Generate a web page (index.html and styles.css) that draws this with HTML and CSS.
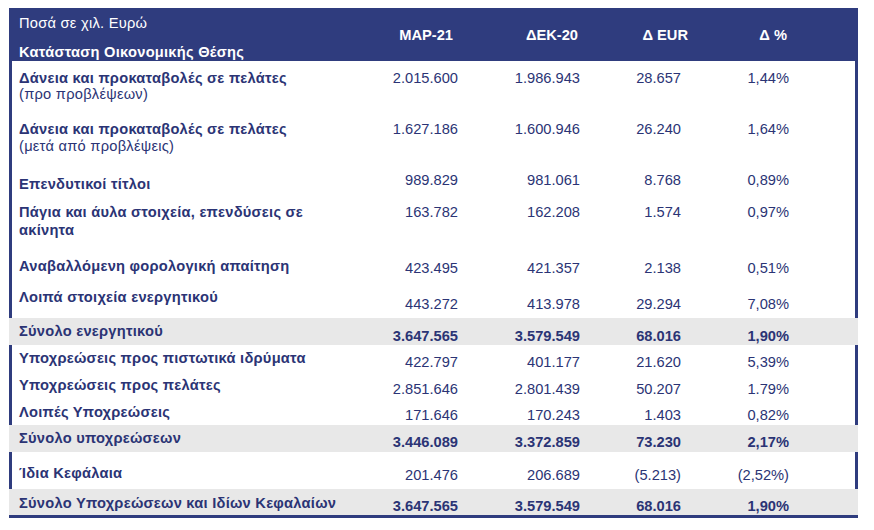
FILE: index.html
```html
<!DOCTYPE html>
<html lang="el">
<head>
<meta charset="utf-8">
<title>Κατάσταση Οικονομικής Θέσης</title>
<link rel="stylesheet" href="styles.css">
</head>
<body>
<div class="panel">
  <div class="row head">
    <div class="lab">
      <div class="unit">Ποσά σε χιλ. Ευρώ</div>
      <div class="title">Κατάσταση Οικονομικής Θέσης</div>
    </div>
    <div class="num h1">MAP-21</div>
    <div class="num h2">ΔΕΚ-20</div>
    <div class="num h3">Δ EUR</div>
    <div class="num h4">Δ %</div>
  </div>

  <div class="row r1">
    <div class="lab">Δάνεια και προκαταβολές σε πελάτες<span class="sub">(προ προβλέψεων)</span></div>
    <div class="num">2.015.600</div><div class="num">1.986.943</div><div class="num">28.657</div><div class="num">1,44%</div>
  </div>
  <div class="row r2">
    <div class="lab">Δάνεια και προκαταβολές σε πελάτες<span class="sub">(μετά από προβλέψεις)</span></div>
    <div class="num">1.627.186</div><div class="num">1.600.946</div><div class="num">26.240</div><div class="num">1,64%</div>
  </div>
  <div class="row r3">
    <div class="lab">Επενδυτικοί τίτλοι</div>
    <div class="num">989.829</div><div class="num">981.061</div><div class="num">8.768</div><div class="num">0,89%</div>
  </div>
  <div class="row r4">
    <div class="lab">Πάγια και άυλα στοιχεία, επενδύσεις σε<br>ακίνητα</div>
    <div class="num">163.782</div><div class="num">162.208</div><div class="num">1.574</div><div class="num">0,97%</div>
  </div>
  <div class="row r5">
    <div class="lab">Αναβαλλόμενη φορολογική απαίτηση</div>
    <div class="num">423.495</div><div class="num">421.357</div><div class="num">2.138</div><div class="num">0,51%</div>
  </div>
  <div class="row r6">
    <div class="lab">Λοιπά στοιχεία ενεργητικού</div>
    <div class="num">443.272</div><div class="num">413.978</div><div class="num">29.294</div><div class="num">7,08%</div>
  </div>
  <div class="row total r7">
    <div class="lab">Σύνολο ενεργητικού</div>
    <div class="num">3.647.565</div><div class="num">3.579.549</div><div class="num">68.016</div><div class="num">1,90%</div>
  </div>
  <div class="row r8">
    <div class="lab">Υποχρεώσεις προς πιστωτικά ιδρύματα</div>
    <div class="num">422.797</div><div class="num">401.177</div><div class="num">21.620</div><div class="num">5,39%</div>
  </div>
  <div class="row r9">
    <div class="lab">Υποχρεώσεις προς πελάτες</div>
    <div class="num">2.851.646</div><div class="num">2.801.439</div><div class="num">50.207</div><div class="num">1.79%</div>
  </div>
  <div class="row r10">
    <div class="lab">Λοιπές Υποχρεώσεις</div>
    <div class="num">171.646</div><div class="num">170.243</div><div class="num">1.403</div><div class="num">0,82%</div>
  </div>
  <div class="row total r11">
    <div class="lab">Σύνολο υποχρεώσεων</div>
    <div class="num">3.446.089</div><div class="num">3.372.859</div><div class="num">73.230</div><div class="num">2,17%</div>
  </div>
  <div class="row r12">
    <div class="lab">Ίδια Κεφάλαια</div>
    <div class="num">201.476</div><div class="num">206.689</div><div class="num">(5.213)</div><div class="num">(2,52%)</div>
  </div>
  <div class="row total r13">
    <div class="lab">Σύνολο Υποχρεώσεων και Ιδίων Κεφαλαίων</div>
    <div class="num">3.647.565</div><div class="num">3.579.549</div><div class="num">68.016</div><div class="num">1,90%</div>
  </div>
</div>
</body>
</html>
```
FILE: styles.css
```css
html, body {
  margin: 0;
  padding: 0;
  background: #ffffff;
}

body {
  font-family: "Liberation Sans", Arial, sans-serif;
  font-size: 11pt;
  line-height: 18px;
  color: #2b3475;
}

.panel {
  margin: 8px 0 0 9px;
  width: 843px;
  border: 3px solid #2f3c7e;
  border-top: 0;
}

.row {
  display: grid;
  grid-template-columns: 368px 78px 122px 101px 108px 1fr;
  margin: 0 -3px;
  padding: 0 3px;
}

.lab {
  padding-left: 7px;
  font-weight: bold;
  white-space: nowrap;
  letter-spacing: 0.25px;
}

.num {
  text-align: right;
  white-space: nowrap;
}

.sub {
  display: block;
  font-weight: normal;
  line-height: 16px;
}

/* header */
.head {
  background: #2f3c7e;
  color: #ffffff;
  height: 53px;
  margin: 0 -3px;
}
.head .lab { padding-top: 6px; }
.head .unit { font-weight: normal; }
.head .title { font-weight: bold; margin-top: 11px; }
.head .num { font-weight: bold; padding-top: 18px; }
.head .h1 { padding-right: 5px; }
.head .h2 { padding-right: 2px; }
.head .h3 { margin-right: -7px; }
.head .h4 { padding-right: 2px; }

/* total rows */
.total {
  background: #e8e8e8;
}
.total .num { font-weight: bold; }

/* body rows: heights and baselines */
.r1 { height: 51px; }
.r1 .lab, .r1 .num { padding-top: 8px; }
.r1 .sub { line-height: 15px; }

.r2 { height: 53px; }
.r2 .lab, .r2 .num { padding-top: 8px; }

.r3 { height: 30px; }
.r3 .lab { padding-top: 10px; }
.r3 .num { padding-top: 6px; }

.r4 { height: 50px; }
.r4 .lab, .r4 .num { padding-top: 8px; }

.r5 { height: 35px; }
.r5 .lab { padding-top: 12px; }
.r5 .num { padding-top: 14px; }

.r6 { height: 38px; }
.r6 .lab { padding-top: 8px; }
.r6 .num { padding-top: 15px; }

.r7 { height: 27px; }
.r7 .lab { padding-top: 4px; }
.r7 .num { padding-top: 9px; }

.r8 { height: 27px; }
.r8 .lab { padding-top: 4px; }
.r8 .num { padding-top: 8px; }

.r9 { height: 27px; }
.r9 .lab { padding-top: 4px; }
.r9 .num { padding-top: 8px; }

.r10 { height: 26px; }
.r10 .lab { padding-top: 4px; }
.r10 .num { padding-top: 7px; }

.r11 { height: 27px; }
.r11 .lab { padding-top: 4px; }
.r11 .num { padding-top: 8px; }

.r12 { height: 37px; }
.r12 .lab { padding-top: 12px; }
.r12 .num { padding-top: 14px; }

.r13 { height: 26px; }
.r13 .lab { padding-top: 5px; }
.r13 .num { padding-top: 8px; }
```
